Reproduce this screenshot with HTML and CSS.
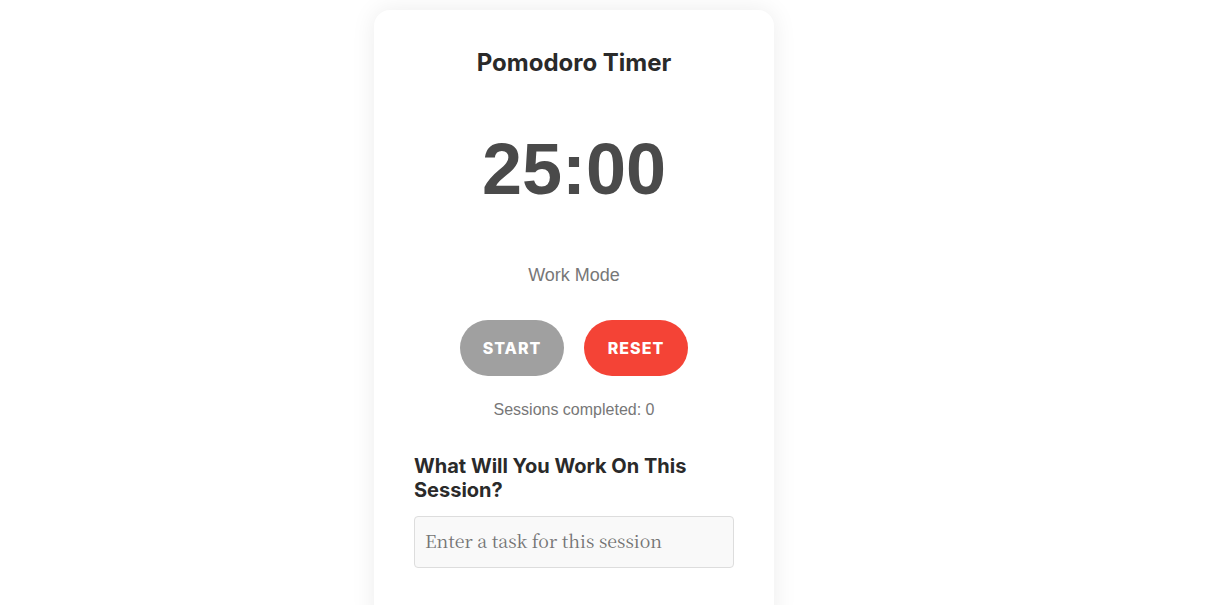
FILE: index.html
```html
<!DOCTYPE html>
<html lang="en">
<head>
<meta charset="UTF-8">
<title>Pomodoro Timer</title>
<link rel="stylesheet" href="styles.css">
</head>
<body>
<main class="card">
  <h1 class="title">Pomodoro Timer</h1>
  <div class="timer">25:00</div>
  <p class="mode">Work Mode</p>
  <div class="controls">
    <button class="btn btn-start">START</button>
    <button class="btn btn-reset">RESET</button>
  </div>
  <p class="sessions">Sessions completed: 0</p>
  <section class="task">
    <h2 class="task-title">What Will You Work On This Session?</h2>
    <input class="task-input" type="text" placeholder="Enter a task for this session">
  </section>
</main>
</body>
</html>
```

FILE: styles.css
```css
html, body {
  margin: 0;
  padding: 0;
  background: #ffffff;
}
body {
  display: flex;
  justify-content: center;
  padding: 10px 76px 0 0;
  font-family: "Liberation Sans", Arial, sans-serif;
}
.card {
  width: 400px;
  box-sizing: border-box;
  padding: 40px 40px 40px;
  background: #ffffff;
  border-radius: 16px;
  box-shadow: 0 0 24px rgba(0, 0, 0, 0.08);
  text-align: center;
  min-height: 620px;
}
.title {
  margin: 0;
  font-family: Inter, sans-serif;
  font-size: 24px;
  font-weight: 700;
  color: #2a2a2a;
  line-height: 26px;
}
.timer {
  margin-top: 50px;
  font-family: "Liberation Sans", Arial, sans-serif;
  font-size: 72px;
  font-weight: 700;
  color: #4a4a4a;
  line-height: 86px;
}
.mode {
  margin: 53px 0 0;
  font-size: 18px;
  color: #777777;
  line-height: 20px;
}
.controls {
  display: flex;
  justify-content: center;
  gap: 20px;
  margin-top: 35px;
}
.btn {
  width: 104px;
  height: 56px;
  border: none;
  border-radius: 28px;
  font-family: Inter, sans-serif;
  font-size: 16px;
  font-weight: 800;
  letter-spacing: 1px;
  color: #ffffff;
  cursor: pointer;
}
.btn-start {
  background: #a0a0a0;
}
.btn-reset {
  background: #f44336;
}
.sessions {
  margin: 24px 0 0;
  font-size: 16px;
  color: #777777;
  line-height: 20px;
}
.task {
  margin-top: 34px;
  text-align: left;
}
.task-title {
  margin: 0;
  font-family: Inter, sans-serif;
  font-size: 20px;
  font-weight: 700;
  color: #2a2a2a;
  line-height: 24px;
}
.task-input {
  display: block;
  box-sizing: border-box;
  width: 100%;
  height: 52px;
  margin-top: 14px;
  padding: 0 10px 3px;
  background: #f9f9f9;
  border: 1px solid #dddddd;
  border-radius: 4px;
  font-family: "Noto Serif CJK SC", serif;
  font-size: 17.8px;
  color: #333333;
}
.task-input::placeholder {
  color: #757575;
}
```
